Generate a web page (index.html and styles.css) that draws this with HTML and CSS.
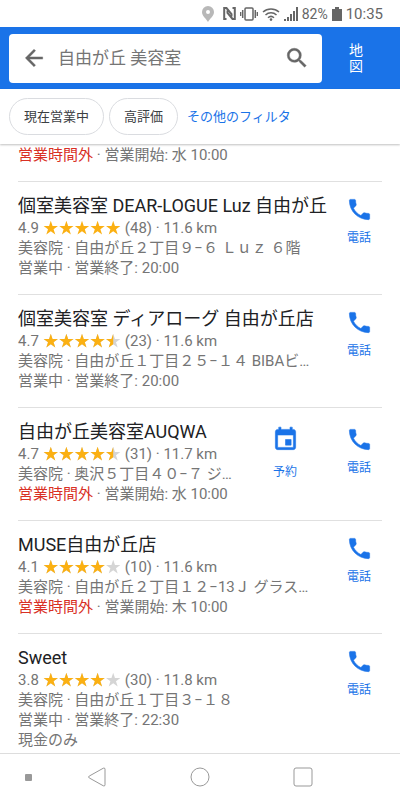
FILE: index.html
```html
<!DOCTYPE html>
<html lang="ja">
<head>
<meta charset="utf-8">
<meta name="viewport" content="width=device-width, initial-scale=1">
<title>自由が丘 美容室</title>
<link rel="stylesheet" href="styles.css">
</head>
<body>
<svg class="defs" aria-hidden="true">
  <symbol id="star" viewBox="0 0 24 24"><path d="M12 1l2.700 7.900h8.300l-6.700 5 2.600 8L12 17.100l-6.900 4.800 2.600-8L1 8.900h8.300z"/></symbol>
  <symbol id="call" viewBox="0 0 24 24"><path d="M6.620 10.790c1.440 2.830 3.760 5.140 6.590 6.590l2.200-2.200c.27-.27.67-.36 1.020-.24 1.120.37 2.330.57 3.570.57.55 0 1 .45 1 1V20c0 .55-.45 1-1 1C10.610 21 3 13.390 3 4c0-.55.45-1 1-1h3.500c.55 0 1 .45 1 1 0 1.250.2 2.450.57 3.570.11.35.03.74-.25 1.020z"/></symbol>
  <symbol id="event" viewBox="0 0 24 24"><path d="M17 12h-5v5h5zM16 1v2H8V1H6v2H5c-1.110 0-2 .9-2 2v14c0 1.100.89 2 2 2h14c1.100 0 2-.9 2-2V5c0-1.100-.9-2-2-2h-1V1zm3 18H5V8h14z"/></symbol>
  <symbol id="stars50" viewBox="0 0 80 16">
    <use href="#star" x="0" width="16" height="16"/><use href="#star" x="16" width="16" height="16"/><use href="#star" x="32" width="16" height="16"/><use href="#star" x="48" width="16" height="16"/><use href="#star" x="64" width="16" height="16"/>
  </symbol>
  <clipPath id="clip45"><path d="M0 0h72v16H0z"/></clipPath>
  <clipPath id="clip40"><path d="M0 0h64v16H0z"/></clipPath>
</svg>

<div class="status">
  <svg class="pin" viewBox="0 0 12 16" width="12" height="16"><path fill-rule="evenodd" d="M6 0a6 6 0 0 0-6 6c0 4 4 6.500 6 10 2-3.500 6-6 6-10a6 6 0 0 0-6-6zm0 4a2 2 0 1 1 0 4 2 2 0 0 1 0-4z"/></svg>
  <svg viewBox="0 0 13 13" width="13" height="13"><path class="nfc" d="M3.500 12H1.200V1h2.300l5 6v2.500M9.500 1h2.300v11H9.500l-5-6V3.500"/></svg>
  <svg viewBox="0 0 18 14" width="18" height="14"><rect class="line" x="5" y="1" width="8" height="12" rx="1"/><path class="line" d="M2.700 3v8M.6 5v4M15.300 3v8M17.400 5v4"/></svg>
  <svg viewBox="0 0 18 14" width="18" height="14"><path class="line" d="M1 5a12 12 0 0 1 16 0M3.500 8a8 8 0 0 1 11 0M6 10.700a4.500 4.500 0 0 1 6 0"/><circle cx="9" cy="12.600" r="1.300"/></svg>
  <svg viewBox="0 0 14 14" width="14" height="14"><path d="M0 12h2v2H0zM3 10h2v4H3zM6 7h2v7H6zM9 4h2v10H9zM12 0h2v14h-2z"/></svg>
  <span class="percent">82%</span>
  <svg class="battery" viewBox="0 0 10 14" width="10" height="14"><path d="M3 0h4v2h3v12H0V2h3z"/></svg>
  <span class="clock">10:35</span>
</div>

<header class="top">
  <form class="search">
    <button type="button" class="icon-btn" aria-label="戻る"><svg viewBox="0 0 24 24" width="26" height="26"><path d="M20 11H7.830l5.590-5.590L12 4l-8 8 8 8 1.410-1.410L7.830 13H20z"/></svg></button>
    <input type="text" aria-label="検索" value="自由が丘 美容室">
    <button type="button" class="icon-btn" aria-label="検索する"><svg viewBox="0 0 24 24" width="26" height="26"><path d="M15.500 14h-.79l-.28-.27A6.470 6.470 0 0 0 16 9.500 6.500 6.500 0 1 0 9.500 16c1.610 0 3.090-.59 4.230-1.570l.27.28v.79l5 4.990L20.490 19zm-6 0C7.010 14 5 11.990 5 9.500S7.010 5 9.500 5 14 7.010 14 9.500 11.990 14 9.500 14z"/></svg></button>
  </form>
  <button type="button" class="map">地<br>図</button>
</header>

<nav class="filters">
  <button type="button" class="chip">現在営業中</button>
  <button type="button" class="chip">高評価</button>
  <a href="#">その他のフィルタ</a>
</nav>

<main>
  <ul class="list">
    <li class="item first"><div class="info"><p><span class="closed">営業時間外</span> · 営業開始: 水 10:00</p></div></li>
    <li class="item">
      <div class="info">
        <h2>個室美容室 DEAR-LOGUE Luz 自由が丘</h2>
        <p class="rating">4.9 <svg class="stars" viewBox="0 0 80 16"><use class="on" href="#stars50"/></svg> (48) · 11.6 km</p>
        <p>美容院 · 自由が丘２丁目９−６ Ｌｕｚ ６階</p>
        <p>営業中 · 営業終了: 20:00</p>
      </div>
      <div class="actions"><a href="#"><svg viewBox="0 0 24 24"><use href="#call"/></svg>電話</a></div>
    </li>
    <li class="item">
      <div class="info">
        <h2>個室美容室 ディアローグ 自由が丘店</h2>
        <p class="rating">4.7 <svg class="stars" viewBox="0 0 80 16"><use class="off" href="#stars50"/><g clip-path="url(#clip45)"><use class="on" href="#stars50"/></g></svg> (23) · 11.6 km</p>
        <p>美容院 · 自由が丘１丁目２５−１４ BIBAビ…</p>
        <p>営業中 · 営業終了: 20:00</p>
      </div>
      <div class="actions"><a href="#"><svg viewBox="0 0 24 24"><use href="#call"/></svg>電話</a></div>
    </li>
    <li class="item">
      <div class="info">
        <h2>自由が丘美容室AUQWA</h2>
        <p class="rating">4.7 <svg class="stars" viewBox="0 0 80 16"><use class="off" href="#stars50"/><g clip-path="url(#clip45)"><use class="on" href="#stars50"/></g></svg> (31) · 11.7 km</p>
        <p>美容院 · 奥沢５丁目４０−７ ジ…</p>
        <p><span class="closed">営業時間外</span> · 営業開始: 水 10:00</p>
      </div>
      <div class="actions pair"><a href="#" class="book"><svg viewBox="0 0 24 24"><use href="#event"/></svg>予約</a><a href="#"><svg viewBox="0 0 24 24"><use href="#call"/></svg>電話</a></div>
    </li>
    <li class="item">
      <div class="info">
        <h2>MUSE自由が丘店</h2>
        <p class="rating">4.1 <svg class="stars" viewBox="0 0 80 16"><use class="off" href="#stars50"/><g clip-path="url(#clip40)"><use class="on" href="#stars50"/></g></svg> (10) · 11.6 km</p>
        <p>美容院 · 自由が丘２丁目１２−13Ｊ グラス…</p>
        <p><span class="closed">営業時間外</span> · 営業開始: 木 10:00</p>
      </div>
      <div class="actions"><a href="#"><svg viewBox="0 0 24 24"><use href="#call"/></svg>電話</a></div>
    </li>
    <li class="item">
      <div class="info">
        <h2>Sweet</h2>
        <p class="rating">3.8 <svg class="stars" viewBox="0 0 80 16"><use class="off" href="#stars50"/><g clip-path="url(#clip40)"><use class="on" href="#stars50"/></g></svg> (30) · 11.8 km</p>
        <p>美容院 · 自由が丘１丁目３−１８</p>
        <p>営業中 · 営業終了: 22:30</p>
        <p>現金のみ</p>
      </div>
      <div class="actions"><a href="#"><svg viewBox="0 0 24 24"><use href="#call"/></svg>電話</a></div>
    </li>
  </ul>
</main>

<footer class="keys">
  <span class="dot"></span>
  <button type="button" aria-label="戻る"><svg viewBox="0 0 20 20" width="20" height="20"><path d="M16.300 1.200L2.200 9.100q-1.500.9 0 1.800l14.100 7.900q1.700.7 1.700-1V2.200q0-1.700-1.700-1z"/></svg></button>
  <button type="button" aria-label="ホーム"><svg viewBox="0 0 20 20" width="20" height="20"><circle cx="10" cy="10" r="9"/></svg></button>
  <button type="button" aria-label="履歴"><svg viewBox="0 0 20 20" width="20" height="20"><rect x="1" y="1" width="18" height="18" rx="2"/></svg></button>
</footer>
</body>
</html>
```
FILE: styles.css
```css
* { box-sizing: border-box; }

body {
  margin: 0;
  height: 100vh;
  display: flex;
  flex-direction: column;
  background: #fff;
  color: #757575;
  font-family: Roboto, "Noto Sans CJK JP", sans-serif;
  font-size: 15px;
  line-height: 20px;
}

button, input { font: inherit; color: inherit; border: 0; background: none; padding: 0; }
a { color: #1a73e8; text-decoration: none; }
h2, p, ul { margin: 0; padding: 0; font-weight: 400; }
svg { display: block; flex: none; }
.defs { position: absolute; width: 0; height: 0; }

.status {
  flex: none;
  height: 27px;
  padding-right: 17px;
  display: flex;
  align-items: center;
  justify-content: flex-end;
  gap: 4px;
  color: #666;
  fill: #666;
}
.pin { fill: #b8b8b8; margin-right: 5px; }
.line { fill: none; stroke: #666; stroke-width: 1.5; }
.nfc { fill: none; stroke: #666; stroke-width: 2; }
.percent { font-size: 14px; }

.top {
  flex: none;
  display: flex;
  align-items: center;
  height: 62px;
  padding-left: 9px;
  background: #1a73e8;
}
.search {
  flex: 1;
  min-width: 0;
  display: flex;
  align-items: center;
  height: 49px;
  padding: 0 12px;
  border-radius: 4px;
  background: #fff;
}
.search input { flex: 1; min-width: 0; margin-left: 11px; font-size: 17px; outline: 0; }
.icon-btn { fill: #666; stroke: #666; stroke-width: .4; }
.map { width: 78px; padding-right: 10px; color: #fff; font-size: 14px; line-height: 16px; }

.filters {
  position: relative;
  flex: none;
  display: flex;
  align-items: center;
  gap: 5px;
  height: 55px;
  padding: 0 9px;
  font-size: 13px;
  background: #fff;
  box-shadow: 0 1px 2px rgba(0, 0, 0, .25);
}
.chip { height: 37px; padding: 0 14px; border: 1px solid #dadce0; border-radius: 19px; color: #3c4043; }
.filters a { margin-left: 4px; }

main { flex: 1; min-height: 0; overflow: hidden; }
.list { list-style: none; }
.item {
  display: flex;
  margin: 0 18px;
  padding: 12px 0 16px;
  border-top: 1px solid #e0e0e0;
}
.item.first { padding-top: 1px; border-top: 0; }
.info { flex: 1; min-width: 0; white-space: nowrap; }
.info h2 { font-size: 18px; line-height: 24px; color: #202124; }
.rating { display: flex; align-items: center; gap: 4px; }
.stars { width: 78px; height: 16px; }
.on { fill: #fbb012; }
.off { fill: #d5d5d5; }
.closed { color: #d93025; }

.actions { display: flex; align-items: flex-start; margin-right: -14px; }
.actions a {
  display: flex;
  flex-direction: column;
  align-items: center;
  gap: 5px;
  width: 74px;
  padding-top: 2px;
  font-size: 12px;
}
.actions svg { width: 27px; height: 27px; fill: #1a73e8; stroke: #1a73e8; stroke-width: .5; }
.pair a { padding-top: 6px; }
.pair .book { gap: 9px; }

.keys {
  flex: none;
  display: grid;
  grid-template-columns: 46px 1fr 1fr 1fr 46px;
  align-items: center;
  justify-items: center;
  height: 47px;
  border-top: 1px solid #ddd;
}
.keys svg { fill: none; stroke: #999; stroke-width: 1; }
.dot { width: 7px; height: 7px; margin-left: 10px; border-radius: 1px; background: #999; }
```
